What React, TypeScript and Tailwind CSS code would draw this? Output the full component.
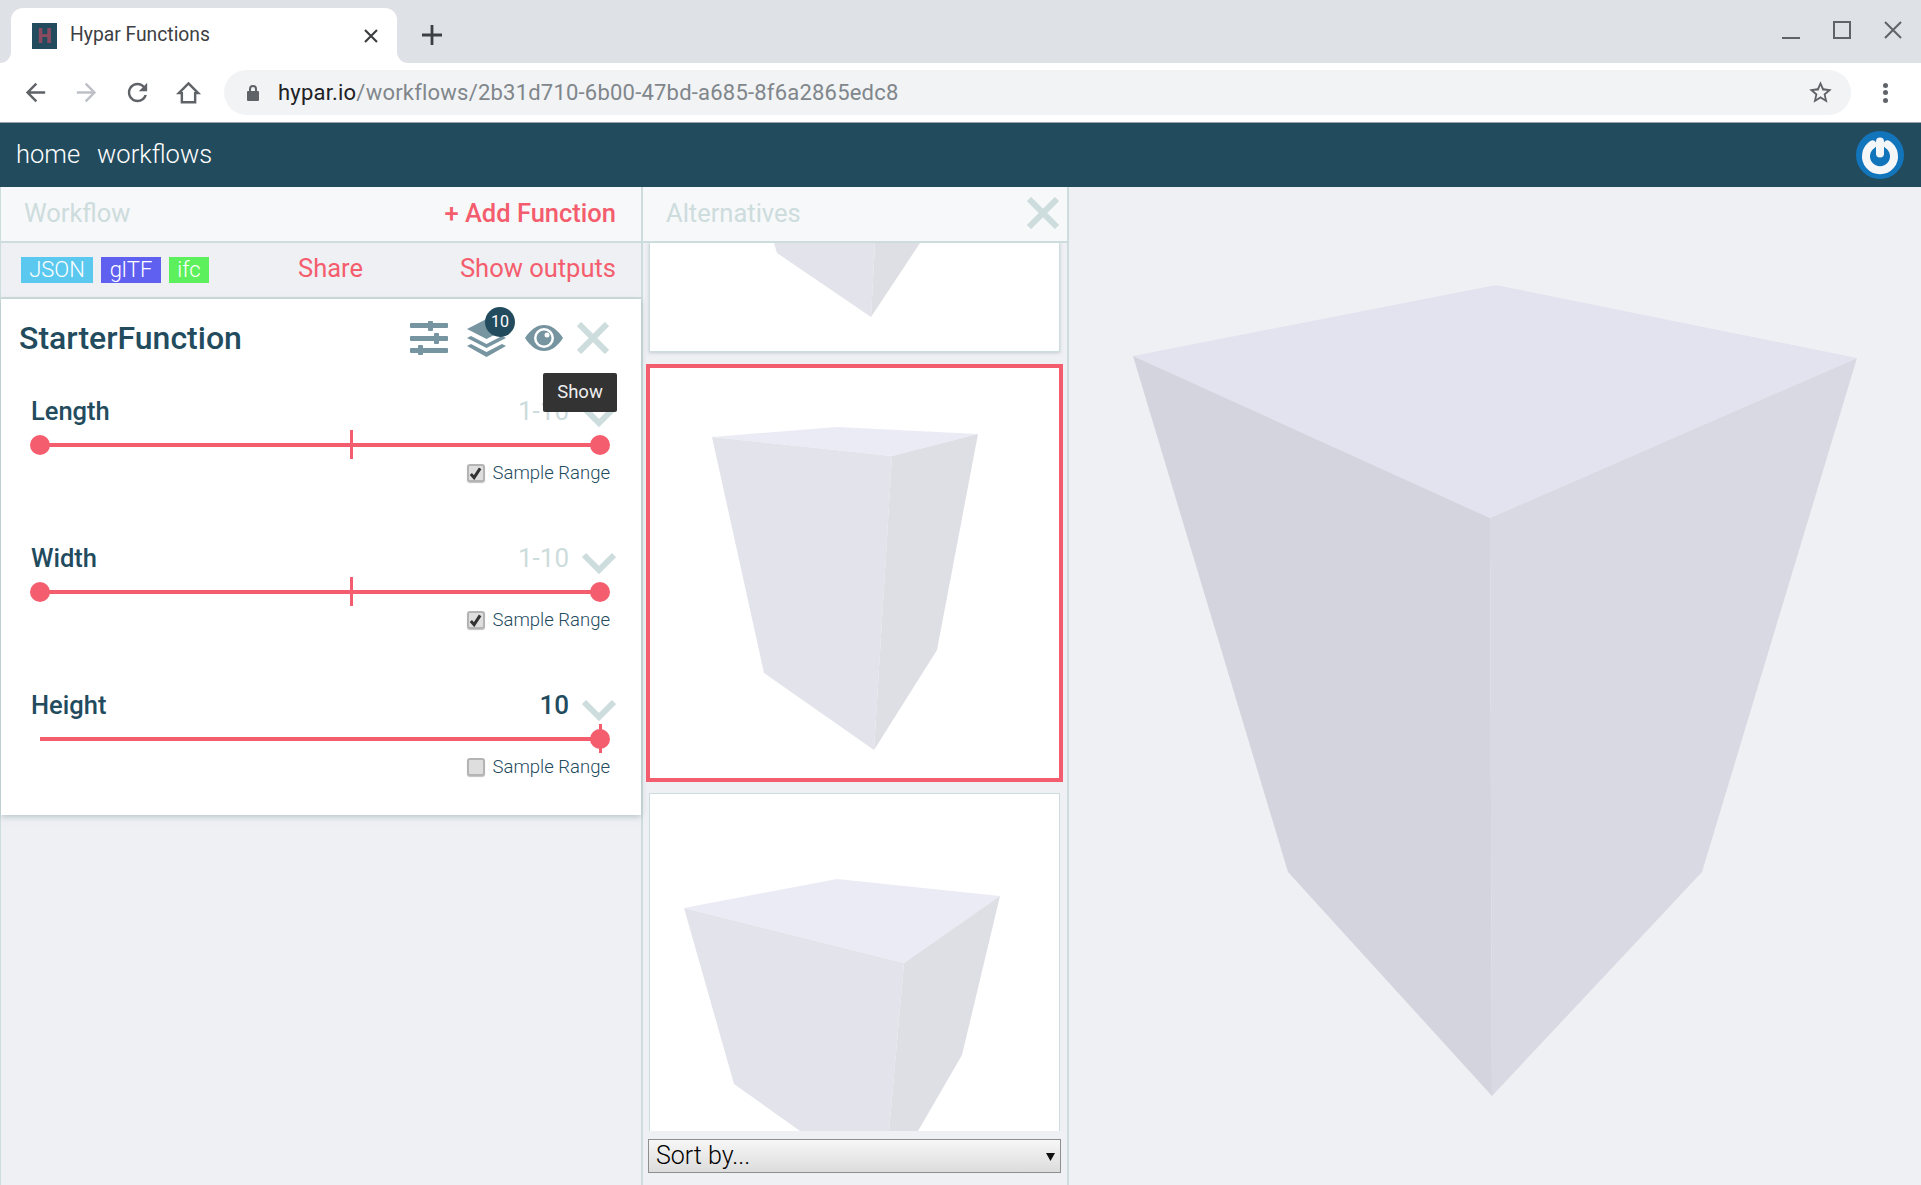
import React from "react";

const Mat = ({ d, className }: { d: string; className?: string }) => (
  <svg viewBox="0 0 24 24" className={className} fill="currentColor"><path d={d} /></svg>
);

function Param({ name, value, range, checked, tick }: { name: string; value: string; range: boolean; checked: boolean; tick: "mid" | "end" }) {
  return (
    <div className="h-[147px] pl-[30px] pr-[12px]">
      <div className="flex h-[34px] w-[585px] items-center justify-between pt-[1px]">
        <span className="text-[25.5px] font-medium text-[#234b5e]">{name}</span>
        <div className="flex items-center gap-[13px]">
          <span className={range ? "text-[26px] text-[#cddcdc]" : "text-[26px] font-medium text-[#234b5e]"}>{value}</span>
          <svg viewBox="0 0 34 22" className="mt-[8px] h-[22px] w-[34px]" fill="none" stroke="#cddcdc" strokeWidth="6"><path d="M2 3l15 15L32 3" /></svg>
        </div>
      </div>
      <div className="relative h-[34px] w-[579px]">
        <div className="absolute left-[9px] right-[9px] top-[15px] h-[4px] bg-[#f45d6d]" />
        {range && <div className="absolute left-[-1px] top-[7px] h-[20px] w-[20px] rounded-full bg-[#f45d6d]" />}
        <div className="absolute right-0 top-[7px] h-[20px] w-[20px] rounded-full bg-[#f45d6d]" />
        {tick === "mid" ? (
          <div className="absolute left-[319px] top-[2px] h-[29px] w-[3px] bg-[#f45d6d]" />
        ) : (
          <div className="absolute right-[8px] top-[2px] h-[29px] w-[3px] bg-[#f45d6d]" />
        )}
      </div>
      <div className="mt-[-1px] flex w-[579px] items-center justify-end gap-[8px]">
        <span className="flex h-[18px] w-[18px] items-center justify-center rounded-[3px] border-[2px] border-[#b4b4b4] bg-[#dedede] shadow-[0_1px_1px_rgba(0,0,0,0.25)]">
          {checked && (
            <svg viewBox="0 0 14 14" className="h-[13px] w-[13px]"><path d="M2 7.5l3.5 4L12 1.5" fill="none" stroke="#333" strokeWidth="3.2" /></svg>
          )}
        </span>
        <span className="text-[18.5px] font-light leading-[24px] text-[#234b5e]">Sample Range</span>
      </div>
    </div>
  );
}

export default function App() {
  return (
    <div className="flex h-[1185px] w-[1921px] flex-col overflow-hidden bg-[#eff0f4] font-['Roboto',sans-serif]">
      {/* Tab strip */}
      <div className="flex h-[63px] items-end bg-[#dee1e6] pl-[11px]">
        <div className="relative flex h-[55px] w-[386px] items-center rounded-t-[12px] bg-white pl-[21px] pr-[19px]">
          <div className="absolute bottom-0 left-[-11px] h-[11px] w-[11px] bg-white">
            <div className="h-full w-full rounded-br-[11px] bg-[#dee1e6]" />
          </div>
          <div className="absolute bottom-0 right-[-11px] h-[11px] w-[11px] bg-white">
            <div className="h-full w-full rounded-bl-[11px] bg-[#dee1e6]" />
          </div>
          <div className="flex h-[26px] w-[25px] items-center justify-center bg-[#234b5e] text-[20px] font-black leading-none text-[#8a4a5f]">H</div>
          <span className="ml-[13px] flex-1 text-[19.3px] text-[#3c4043]">Hypar Functions</span>
          <svg viewBox="0 0 14 14" className="h-[14px] w-[14px]" stroke="#3c4043" strokeWidth="2.2"><path d="M1 1l12 12M13 1L1 13" /></svg>
        </div>
        <div className="mb-[18px] ml-[25px] h-[20px] w-[20px]">
          <svg viewBox="0 0 20 20" className="h-[20px] w-[20px]" stroke="#3c4043" strokeWidth="2.8"><path d="M10 0v20M0 10h20" /></svg>
        </div>
        <div className="mb-[24px] ml-auto mr-[19px] flex items-end gap-[33px]">
          <div className="h-[2px] w-[18px] bg-[#5f6368]" />
          <div className="h-[18px] w-[18px] border-[2px] border-[#5f6368]" />
          <svg viewBox="0 0 18 18" className="h-[18px] w-[18px]" stroke="#5f6368" strokeWidth="2"><path d="M1 1l16 16M17 1L1 17" /></svg>
        </div>
      </div>
      {/* Toolbar */}
      <div className="flex h-[60px] items-center border-b border-[#9aa0a6] bg-white pl-[21px] pr-[33px]">
        <Mat className="h-[29px] w-[29px] text-[#5f6368]" d="M20 11H7.83l5.59-5.59L12 4l-8 8 8 8 1.41-1.41L7.83 13H20v-2z" />
        <Mat className="ml-[22px] h-[29px] w-[29px] text-[#bdc1c6]" d="M4 13h12.17l-5.59 5.59L12 20l8-8-8-8-1.41 1.41L16.17 11H4v2z" />
        <Mat className="ml-[22px] h-[29px] w-[29px] text-[#5f6368]" d="M17.65 6.35C16.2 4.9 14.21 4 12 4c-4.42 0-7.99 3.58-7.99 8s3.57 8 7.99 8c3.73 0 6.84-2.55 7.73-6h-2.08c-.82 2.33-3.04 4-5.65 4-3.31 0-6-2.69-6-6s2.69-6 6-6c1.66 0 3.14.69 4.22 1.78L13 11h7V4l-2.35 2.35z" />
        <svg viewBox="0 0 24 24" className="ml-[22px] h-[29px] w-[29px]" fill="none" stroke="#5f6368" strokeWidth="2"><path d="M12 4.5L20 12.5h-2.5V20h-11v-7.5H4z" /></svg>
        <div className="ml-[21px] flex h-[45px] flex-1 items-center rounded-full bg-[#f1f3f4] pl-[22px] pr-[17px]">
          <svg viewBox="0 0 14 18" className="h-[18px] w-[14px]" fill="#5f6368"><path d="M2 7h1V5a4 4 0 018 0v2h1a1 1 0 011 1v8a1 1 0 01-1 1H2a1 1 0 01-1-1V8a1 1 0 011-1zm3 0h4V5a2 2 0 00-4 0z" /></svg>
          <span className="ml-[18px] flex-1 text-[22px] tracking-[0.21px] text-[#80868b]"><span className="text-[#202124]">hypar.io</span>/workflows/2b31d710-6b00-47bd-a685-8f6a2865edc8</span>
          <Mat className="h-[27px] w-[27px] text-[#5f6368]" d="M22 9.24l-7.19-1.03L12 2 9.19 8.21 2 9.24l5.46 4.73L5.82 21 12 17.27 18.18 21l-1.63-7.03L22 9.24zM12 15.4l-3.76 2.27 1-4.28-3.32-2.88 4.38-.38L12 6.1l1.71 4.04 4.38.38-3.32 2.88 1 4.28L12 15.4z" />
        </div>
        <div className="ml-[32px] flex h-[20px] w-[5px] flex-col justify-between">
          <div className="h-[5px] w-[5px] rounded-full bg-[#5f6368]" />
          <div className="h-[5px] w-[5px] rounded-full bg-[#5f6368]" />
          <div className="h-[5px] w-[5px] rounded-full bg-[#5f6368]" />
        </div>
      </div>
      {/* App nav */}
      <div className="flex h-[64px] items-center bg-[#234b5e] pl-[16px] pr-[17px] text-[25.5px] font-light text-white">
        <span className="mb-[2px]">home</span>
        <span className="mb-[2px] ml-[17px]">workflows</span>
        <div className="ml-auto h-[48px] w-[48px] rounded-full bg-[#1275bb]">
          <svg viewBox="0 0 48 48" className="h-[48px] w-[48px]" fill="none" stroke="#f4f6f8" strokeWidth="8" strokeLinecap="round"><path d="M16.5 13.5a14 14 0 1015 0" /><path d="M24 10.5v12" /></svg>
        </div>
      </div>
      {/* Body */}
      <div className="flex min-h-0 flex-1">
        {/* Left column */}
        <div className="flex w-[641px] flex-col border-l border-[#cddcdc] bg-[#eff0f4]">
          <div className="flex h-[56px] items-center justify-between border-b-[2px] border-[#cddcdc] bg-[#f7f8fa] pb-[2px] pl-[23px] pr-[25px] text-[25.5px]">
            <span className="text-[#cddcdc]">Workflow</span>
            <span className="font-medium text-[#f45d6d]">+ Add Function</span>
          </div>
          <div className="flex h-[56px] items-center border-b-[2px] border-[#cddcdc] pl-[20px] pr-[25px]">
            <div className="flex gap-[8px] text-[22px] font-light leading-[26px] text-white">
              <span className="flex h-[26px] w-[72px] items-center justify-center bg-[#5bc8f0]">JSON</span>
              <span className="flex h-[26px] w-[60px] items-center justify-center bg-[#5f5ff0]">glTF</span>
              <span className="flex h-[26px] w-[40px] items-center justify-center bg-[#5df05d]">ifc</span>
            </div>
            <span className="mb-[3px] ml-[89px] text-[25.5px] text-[#f45d6d]">Share</span>
            <span className="mb-[3px] ml-auto text-[25.5px] text-[#f45d6d]">Show outputs</span>
          </div>
          <div className="relative bg-white shadow-[0_2px_6px_rgba(150,170,175,0.6)]">
            <div className="flex h-[95px] items-center pb-[17px] pl-[18px] pr-[32px]">
              <span className="flex-1 text-[32px] font-medium text-[#234b5e]">StarterFunction</span>
              <svg viewBox="0 0 38 34" className="h-[34px] w-[38px]" fill="#7695a1">
                <rect x="0" y="2" width="38" height="5" rx="1" /><rect x="18" y="0" width="5" height="10" rx="1" />
                <rect x="0" y="15" width="38" height="5" rx="1" /><rect x="24" y="12" width="5" height="11" rx="1" />
                <rect x="0" y="27" width="38" height="5" rx="1" /><rect x="8" y="24" width="5" height="10" rx="1" />
              </svg>
              <div className="relative ml-[19px] h-[38px] w-[39px]">
                <svg viewBox="0 0 39 38" className="h-[38px] w-[39px]" fill="#7695a1">
                  <path d="M19.5 0L39 10 19.5 20 0 10z" />
                  <path d="M0 19l4-2 15.5 8L35 17l4 2-19.5 10z" />
                  <path d="M0 27l4-2 15.5 8L35 25l4 2-19.5 11z" />
                </svg>
                <div className="absolute left-[18px] top-[-12px] flex h-[30px] w-[30px] items-center justify-center rounded-full bg-[#234b5e] text-[16px] text-white">10</div>
              </div>
              <svg viewBox="0 0 38 26" className="ml-[19px] h-[26px] w-[38px]">
                <path d="M0 13C6 4 12 0 19 0s13 4 19 13c-6 9-12 13-19 13S6 22 0 13z" fill="#7695a1" />
                <circle cx="19" cy="13" r="10" fill="white" />
                <circle cx="19" cy="13" r="7.5" fill="#7695a1" />
                <circle cx="22" cy="10" r="2.5" fill="white" />
              </svg>
              <svg viewBox="0 0 32 32" className="ml-[14px] h-[32px] w-[32px]" stroke="#cddcdc" strokeWidth="6"><path d="M2 2l28 28M30 2L2 30" /></svg>
            </div>
            <div className="absolute left-[542px] top-[74px] z-10 flex h-[39px] w-[74px] items-center justify-center rounded-[2px] bg-[#333] text-[18.5px] text-[#eee]">Show</div>
            <Param name="Length" value="1-10" range checked tick="mid" />
            <Param name="Width" value="1-10" range checked tick="mid" />
            <div className="h-[127px]">
              <Param name="Height" value="10" range={false} checked={false} tick="end" />
            </div>
          </div>
        </div>
        {/* Alternatives */}
        <div className="flex w-[428px] flex-col border-x-[2px] border-[#cddcdc]">
          <div className="relative z-10 flex h-[56px] shrink-0 items-center justify-between border-b-[2px] border-[#cddcdc] bg-[#f7f8fa] pb-[2px] pl-[23px] pr-[8px]">
            <span className="text-[25.5px] text-[#cddcdc]">Alternatives</span>
            <svg viewBox="0 0 32 32" className="h-[32px] w-[32px]" stroke="#cddcdc" strokeWidth="6"><path d="M2 2l28 28M30 2L2 30" /></svg>
          </div>
          <div className="flex min-h-0 flex-1 flex-col pl-[3px]">
            <div className="ml-[3px] h-[109px] w-[411px] shrink-0 border-x border-b border-[#cddcdc] bg-white shadow-[0_1px_3px_rgba(150,170,175,0.5)]">
              <svg viewBox="650 243 409 108" className="h-full w-full">
                <path d="M774 243L777 253 871 317 875 243z" fill="#e3e3eb" />
                <path d="M875 243L871 317 920 243z" fill="#dedee5" />
              </svg>
            </div>
            <div className="mt-[12px] h-[418px] w-[417px] shrink-0 border-[4px] border-[#f45d6d] bg-white">
              <svg viewBox="650 368 409 410" className="h-full w-full">
                <path d="M712 437L837 427 978 434 892 456z" fill="#ebebf6" />
                <path d="M712 437L892 456 874 750 764 673z" fill="#e3e3eb" />
                <path d="M892 456L978 434 937 650 874 750z" fill="#dedee5" />
              </svg>
            </div>
            <div className="ml-[3px] mt-[11px] h-[338px] w-[411px] shrink-0 border-x border-t border-[#cddcdc] bg-white">
              <svg viewBox="650 794 409 337" className="h-full w-full">
                <path d="M684 908L837 879 1000 896 904 963z" fill="#ebebf6" />
                <path d="M684 908L904 963 889 1131 800 1131 734 1084z" fill="#e3e3eb" />
                <path d="M904 963L1000 896 962 1055 918 1131 889 1131z" fill="#dedee5" />
              </svg>
            </div>
            <div className="ml-[2px] mt-[8px] flex h-[34px] w-[413px] shrink-0 items-center justify-between border border-[#8e8e8e] bg-gradient-to-b from-[#f7f7f7] to-[#dcdcdc] pl-[7px] pr-[5px] text-[25px] font-light text-black">
              <span>Sort by...</span>
              <svg viewBox="0 0 10 10" className="h-[9px] w-[9px]"><path d="M0 1h10L5 10z" fill="#111" /></svg>
            </div>
          </div>
        </div>
        {/* Viewport */}
        <div className="min-w-0 flex-1">
          <svg viewBox="1069 187 852 998" className="h-full w-full">
            <path d="M1133 356L1496 285 1857 358 1490 518z" fill="#e3e3ef" />
            <path d="M1133 356L1490 518 1492 1096 1288 872z" fill="#d4d4de" />
            <path d="M1490 518L1857 358 1702 872 1492 1096z" fill="#d9d9e3" />
          </svg>
        </div>
      </div>
    </div>
  );
}
